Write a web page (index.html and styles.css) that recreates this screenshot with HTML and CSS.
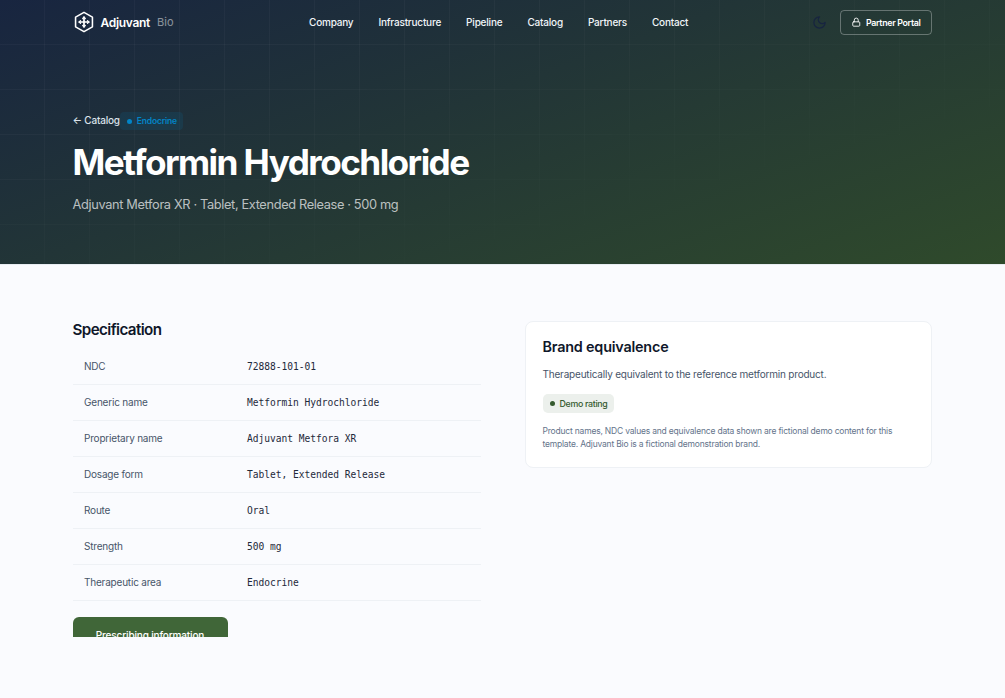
FILE: index.html
```html
<!DOCTYPE html>
<html lang="en">
<head>
<meta charset="utf-8">
<title>Metformin Hydrochloride</title>
<link rel="stylesheet" href="styles.css">
</head>
<body>
<header class="hero">
  <nav class="nav">
    <a class="brand">
      <svg class="brand-icon" viewBox="0 0 24 24" fill="none" stroke="currentColor" stroke-width="1.7" stroke-linecap="round" stroke-linejoin="round"><path d="M12 1.5 21.2 6.75V17.25L12 22.5 2.8 17.25V6.75Z"/><path d="M12 6.8V17.2M6.8 12H17.2" stroke-width="1.9"/><path d="M10.6 8.2 12 6.8 13.4 8.2M10.6 15.8 12 17.2 13.4 15.8M8.2 10.6 6.8 12 8.2 13.4M15.8 10.6 17.2 12 15.8 13.4" stroke-width="1.4"/></svg>
      <span class="brand-name">Adjuvant</span>
      <span class="brand-sub">Bio</span>
    </a>
    <ul class="links">
      <li>Company</li>
      <li>Infrastructure</li>
      <li>Pipeline</li>
      <li>Catalog</li>
      <li>Partners</li>
      <li>Contact</li>
    </ul>
    <div class="actions">
      <svg class="moon" viewBox="0 0 24 24" fill="none" stroke="currentColor" stroke-width="2" stroke-linecap="round" stroke-linejoin="round"><path d="M12 3a6 6 0 0 0 9 9 9 9 0 1 1-9-9Z"/></svg>
      <a class="portal">
        <svg class="lock" viewBox="0 0 24 24" fill="none" stroke="currentColor" stroke-width="2" stroke-linecap="round" stroke-linejoin="round"><rect x="4" y="11" width="16" height="10" rx="2"/><path d="M7.5 11V7a4.5 4.5 0 0 1 9 0v4"/></svg>
        Partner Portal
      </a>
    </div>
  </nav>
  <div class="hero-body">
    <div class="crumbs">
      <a class="back">← Catalog</a>
      <span class="tag"><i class="tag-dot"></i>Endocrine</span>
    </div>
    <h1>Metformin Hydrochloride</h1>
    <p class="lead">Adjuvant Metfora XR · Tablet, Extended Release · 500 mg</p>
  </div>
</header>
<main class="main">
  <div class="columns">
    <section class="spec">
      <h2>Specification</h2>
      <dl class="rows">
        <div class="row"><dt>NDC</dt><dd>72888-101-01</dd></div>
        <div class="row"><dt>Generic name</dt><dd>Metformin Hydrochloride</dd></div>
        <div class="row"><dt>Proprietary name</dt><dd>Adjuvant Metfora XR</dd></div>
        <div class="row"><dt>Dosage form</dt><dd>Tablet, Extended Release</dd></div>
        <div class="row"><dt>Route</dt><dd>Oral</dd></div>
        <div class="row"><dt>Strength</dt><dd>500 mg</dd></div>
        <div class="row"><dt>Therapeutic area</dt><dd>Endocrine</dd></div>
      </dl>
      <a class="cta">Prescribing information</a>
    </section>
    <aside class="card">
      <h3>Brand equivalence</h3>
      <p class="card-text">Therapeutically equivalent to the reference metformin product.</p>
      <span class="rating"><i class="rating-dot"></i>Demo rating</span>
      <p class="note">Product names, NDC values and equivalence data shown are fictional demo content for this template. Adjuvant Bio is a fictional demonstration brand.</p>
    </aside>
  </div>
</main>
</body>
</html>
```
FILE: styles.css
```css
* { box-sizing: border-box; }
html, body { margin: 0; padding: 0; }
body {
  height: 698px;
  overflow: hidden;
  background: #fafbfe;
  font-family: Inter, "Liberation Sans", sans-serif;
  color: #0f172a;
}
.hero {
  position: relative;
  height: 265px;
  padding: 0 72.5px;
  color: #fff;
  border-bottom: 1px solid #e8edf2;
  background: linear-gradient(160deg, #182540 0%, #2f4a2b 100%);
}
.hero::before {
  content: "";
  position: absolute;
  inset: 0;
  background-image:
    linear-gradient(rgba(255,255,255,.03) 1px, transparent 1px),
    linear-gradient(90deg, rgba(255,255,255,.03) 1px, transparent 1px);
  background-size: 45px 45px;
  background-position: 0 44px, 44px 0;
  -webkit-mask-image: linear-gradient(165deg, #000 25%, transparent 80%);
  mask-image: linear-gradient(165deg, #000 25%, transparent 80%);
}
.nav, .hero-body { position: relative; }
.nav {
  display: flex;
  align-items: center;
  height: 44px;
}
.brand { display: flex; align-items: center; width: 236.5px; }
.brand-icon { width: 22px; height: 22px; margin-right: 6px; }
.brand-name { font-size: 12px; font-weight: 600; letter-spacing: -.3px; }
.brand-sub { font-size: 11px; font-weight: 400; color: rgba(255,255,255,.5); margin-left: 7px; }
.links {
  display: flex;
  gap: 25px;
  margin: 0;
  padding: 0;
  list-style: none;
  font-size: 10px;
  font-weight: 500;
  letter-spacing: -.2px;
  color: #f1f5f9;
}
.actions { display: flex; align-items: center; margin-left: auto; margin-right: .5px; }
.moon { width: 15px; height: 15px; color: #172440; margin-right: 13.5px; }
.portal {
  display: flex;
  align-items: center;
  gap: 4px;
  width: 92px;
  height: 25px;
  justify-content: center;
  border: 1px solid rgba(255,255,255,.3);
  border-radius: 4px;
  font-size: 8.8px;
  font-weight: 600;
  letter-spacing: -.3px;
}
.lock { width: 10.5px; height: 10.5px; }
.hero-body { padding-top: 67px; }
.crumbs { display: flex; align-items: center; height: 18px; }
.back { font-size: 10px; font-weight: 500; letter-spacing: -.2px; color: #dbe2ea; }
.tag {
  display: inline-flex;
  align-items: center;
  gap: 5px;
  margin-top: 2px;
  padding: 0 6px 0 7px;
  height: 18px;
  border-radius: 4px;
  background: rgba(2,132,199,.12);
  color: #0284c7;
  font-size: 8.5px;
  font-weight: 600;
  letter-spacing: -.17px;
}
.tag-dot { width: 5px; height: 5px; border-radius: 50%; background: #0284c7; }
h1 {
  margin: 12px 0 0;
  font-size: 35.2px;
  line-height: 42px;
  font-weight: 700;
  letter-spacing: -1.57px;
}
.lead { margin: 12px 0 0; font-size: 12.8px; line-height: 20px; letter-spacing: -.36px; color: rgba(255,255,255,.7); }
.main { height: 372px; overflow: hidden; padding: 56px 72.5px 0; }
.columns { display: grid; grid-template-columns: 408px 407px; gap: 44px; align-items: start; }
h2 { margin: 0; font-size: 15.2px; line-height: 18px; font-weight: 600; letter-spacing: -.6px; }
.rows { margin: 10px 0 0; }
.row {
  display: flex;
  align-items: center;
  height: 36px;
  padding-left: 11.5px;
  border-bottom: 1px solid #eef1f5;
}
dt { width: 163px; padding-bottom: 1px; font-size: 10px; letter-spacing: -.2px; color: #475569; }
dd { margin: 0; font-family: "DejaVu Sans Mono", monospace; font-size: 9.6px; letter-spacing: -.03px; color: #1e293b; }
.cta {
  display: block;
  width: 155px;
  height: 60px;
  margin-top: 16px;
  padding-top: 12px;
  text-align: center;
  background: #406638;
  border-radius: 6px;
  color: #fff;
  font-size: 10px;
  font-weight: 500;
  letter-spacing: -.15px;
}
.card {
  height: 147px;
  padding: 15px 17px;
  background: #fff;
  border: 1px solid #eef1f5;
  border-radius: 8px;
}
h3 { margin: 0; font-size: 14.4px; line-height: 20px; font-weight: 600; letter-spacing: -.2px; }
.card-text { margin: 9px 0 0; font-size: 10px; line-height: 16px; letter-spacing: -.2px; color: #475569; }
.rating {
  display: inline-flex;
  align-items: center;
  gap: 5px;
  margin-top: 12px;
  padding: 0 6px 0 7px;
  height: 19px;
  border-radius: 5px;
  background: #ecf0ec;
  color: #355a2e;
  font-size: 8.8px;
  font-weight: 500;
  letter-spacing: -.3px;
}
.rating-dot { width: 5px; height: 5px; border-radius: 50%; background: #355a2e; }
.note { margin: 12px 0 0; font-size: 8.5px; line-height: 13.4px; letter-spacing: -.2px; color: #64748b; }
```
